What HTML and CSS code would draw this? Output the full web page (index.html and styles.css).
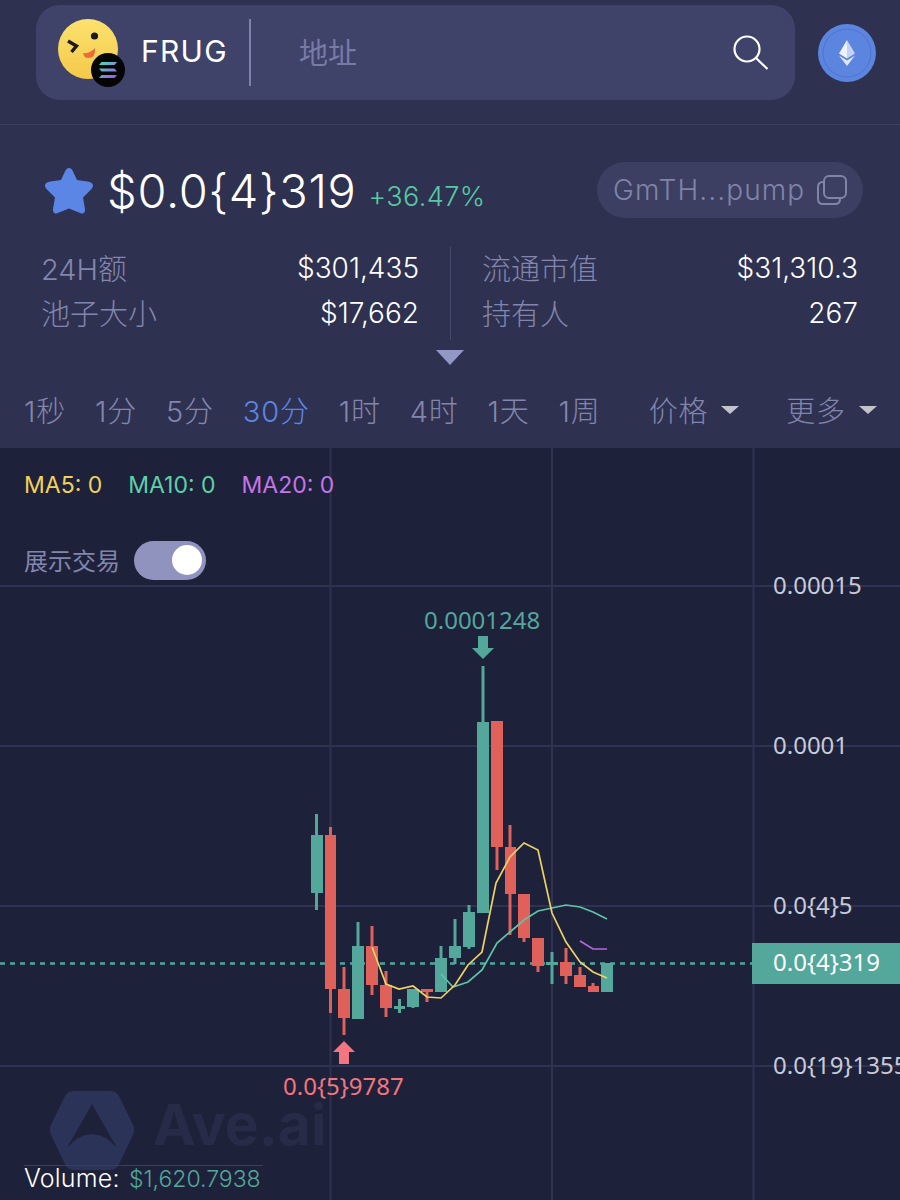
FILE: index.html
```html
<!DOCTYPE html>
<html lang="zh-CN">
<head>
  <meta charset="UTF-8">
  <meta name="viewport" content="width=device-width, initial-scale=1.0">
  <title>FRUG</title>
  <link rel="stylesheet" href="styles.css">
</head>
<body>
  <header class="top-bar">
    <div class="search-box">
      <div class="token-logo">
        <svg class="token-face" viewBox="0 0 60 60">
          <defs>
            <linearGradient id="faceFill" x1="0" y1="0" x2="0" y2="1">
              <stop offset="0" stop-color="#fbe26e"/>
              <stop offset="1" stop-color="#f5c94a"/>
            </linearGradient>
          </defs>
          <circle cx="30" cy="30" r="30" fill="url(#faceFill)"/>
          <circle cx="36.500" cy="17" r="3.600" fill="#1b1b1b"/>
          <path d="M10 22 L18.500 27 L13.500 33" fill="none" stroke="#1b1b1b" stroke-width="3.400"/>
          <path d="M25 34 Q32 35 37 29 Q38 39 30 39 Q26 39 25 34 Z" fill="#ee6a3a"/>
        </svg>
        <svg class="chain-badge" viewBox="0 0 34 34">
          <defs>
            <linearGradient id="solFill" x1="0" y1="0" x2="1" y2="1">
              <stop offset="0" stop-color="#3fe6b0"/>
              <stop offset="1" stop-color="#a84df0"/>
            </linearGradient>
          </defs>
          <circle cx="17" cy="17" r="17" fill="#050505"/>
          <path d="M10.500 9 H26 L23.500 12 H8 Z M8 15.500 H23.500 L26 18.500 H10.500 Z M10.500 22 H26 L23.500 25 H8 Z" fill="url(#solFill)"/>
        </svg>
      </div>
      <span class="token-name">FRUG</span>
      <span class="search-divider"></span>
      <span class="search-hint">地址</span>
      <svg class="search-icon" viewBox="0 0 36 36">
        <circle cx="14" cy="14" r="12.500" fill="none" stroke="#fff" stroke-width="2.200"/>
        <line x1="23" y1="23" x2="34.500" y2="34" stroke="#fff" stroke-width="2.200"/>
      </svg>
    </div>
    <div class="chain-switch">
      <svg viewBox="0 0 58 58">
        <circle cx="29" cy="29" r="29" fill="#5c85e0"/>
        <circle cx="29" cy="29" r="24" fill="none" stroke="#4f74cc" stroke-width="1"/>
        <path d="M29 16 L37 29.500 L29 34.500 Z" fill="#c5d2f3"/>
        <path d="M29 16 L21 29.500 L29 34.500 Z" fill="#eef2fc"/>
        <path d="M21 31.500 L29 36.500 L37 31.500 L29 42 Z" fill="#dfe6f9"/>
      </svg>
    </div>
  </header>

  <section class="summary">
    <div class="price-row">
      <svg class="fav-star" viewBox="0 0 50 50">
        <path d="M25 3 C27 3 28 4.500 29 6.500 L33 15 L43.500 16.500 C47.500 17 49 19 49 20.500 C49 22 48 23.500 46.500 25 L39 32.500 L41 44 C41.500 47 39.500 49 37.500 48.500 L25 43.500 L12.500 48.500 C10.500 49 8.500 47 9 44 L11 32.500 L3.500 25 C2 23.500 1 22 1 20.500 C1 19 2.500 17 6.500 16.500 L17 15 L21 6.500 C22 4.500 23 3 25 3 Z" fill="#5b86e5"/>
      </svg>
      <span class="price">$0.0{4}319</span>
      <span class="change">+36.47%</span>
      <div class="address-chip">
        <span>GmTH...pump</span>
        <svg class="copy-icon" viewBox="0 0 30 30">
          <rect x="7" y="1" width="22" height="22" rx="5" fill="none" stroke="#7f84a8" stroke-width="2"/>
          <path d="M7 7 H6 Q1 7 1 12 V24 Q1 29 6 29 H18 Q23 29 23 24 V23" fill="none" stroke="#7f84a8" stroke-width="2"/>
        </svg>
      </div>
    </div>

    <div class="stats">
      <div class="stats-col">
        <div class="stat"><span class="stat-label">24H额</span><span class="stat-value">$301,435</span></div>
        <div class="stat"><span class="stat-label">池子大小</span><span class="stat-value">$17,662</span></div>
      </div>
      <div class="stats-col stats-col-right">
        <div class="stat"><span class="stat-label">流通市值</span><span class="stat-value">$31,310.3</span></div>
        <div class="stat"><span class="stat-label">持有人</span><span class="stat-value">267</span></div>
      </div>
    </div>
    <div class="expand-arrow"></div>
  </section>

  <nav class="periods">
    <span class="period">1秒</span>
    <span class="period">1分</span>
    <span class="period">5分</span>
    <span class="period active">30分</span>
    <span class="period">1时</span>
    <span class="period">4时</span>
    <span class="period">1天</span>
    <span class="period">1周</span>
    <span class="period dropdown first-dropdown">价格<i class="caret"></i></span>
    <span class="period dropdown">更多<i class="caret"></i></span>
  </nav>

  <main class="chart">
    <svg class="chart-canvas" viewBox="0 448 900 752">
      <!-- watermark -->
      <path class="mark-hex" d="M74 1091 H110 Q116 1091 119 1096 L133 1125 Q135 1130 133 1135 L119 1164 Q116 1170 110 1170 H74 Q68 1170 65 1164 L51 1135 Q49 1130 51 1125 L65 1096 Q68 1091 74 1091 Z"/>
      <path class="mark-arrow" d="M92 1104 L117 1148 Q105 1134 92 1134 Q79 1134 67 1148 Z"/>
      <text class="mark-text" x="153" y="1145">Ave.ai</text>

      <!-- grid -->
      <g class="grid">
        <line x1="0" y1="586" x2="900" y2="586"/>
        <line x1="0" y1="746" x2="900" y2="746"/>
        <line x1="0" y1="906" x2="900" y2="906"/>
        <line x1="0" y1="1066" x2="900" y2="1066"/>
        <line x1="330.500" y1="448" x2="330.500" y2="1200"/>
        <line x1="552" y1="448" x2="552" y2="1200"/>
        <line x1="753.500" y1="448" x2="753.500" y2="1200"/>
      </g>

      <!-- last price line -->
      <line class="last-line" x1="0" y1="963.500" x2="752" y2="963.500"/>

      <!-- candles -->
      <g class="up">
        <line x1="316.500" y1="814" x2="316.500" y2="910"/><rect x="311" y="835" width="12" height="58"/>
        <line x1="358" y1="922" x2="358" y2="1019"/><rect x="352" y="946" width="12" height="73"/>
        <line x1="399.500" y1="999" x2="399.500" y2="1013"/><rect x="394" y="1006" width="11" height="3"/>
        <line x1="413" y1="989" x2="413" y2="1008"/><rect x="407" y="989" width="12" height="18"/>
        <line x1="441" y1="946" x2="441" y2="992"/><rect x="435" y="958" width="12" height="34"/>
        <line x1="455" y1="919" x2="455" y2="964"/><rect x="449" y="946" width="12" height="12"/>
        <line x1="469" y1="905" x2="469" y2="949"/><rect x="463" y="912" width="12" height="35"/>
        <line x1="483" y1="666" x2="483" y2="913"/><rect x="477" y="722" width="12" height="191"/>
        <line x1="552" y1="952" x2="552" y2="984"/><rect x="546" y="962" width="12" height="3"/>
        <rect x="601" y="963" width="12" height="29"/>
      </g>
      <g class="down">
        <line x1="330.500" y1="827" x2="330.500" y2="1013"/><rect x="325" y="835" width="11" height="154"/>
        <line x1="344" y1="967" x2="344" y2="1035"/><rect x="338" y="989" width="12" height="29"/>
        <line x1="372" y1="926" x2="372" y2="995"/><rect x="366" y="946" width="12" height="39"/>
        <line x1="386" y1="971" x2="386" y2="1017"/><rect x="380" y="985" width="12" height="23"/>
        <line x1="427" y1="989" x2="427" y2="1002"/><rect x="421" y="989" width="12" height="3"/>
        <line x1="497" y1="721" x2="497" y2="870"/><rect x="491" y="721" width="12" height="126"/>
        <line x1="510" y1="825" x2="510" y2="935"/><rect x="505" y="847" width="11" height="47"/>
        <line x1="524" y1="894" x2="524" y2="942"/><rect x="518" y="894" width="12" height="44"/>
        <line x1="538" y1="938" x2="538" y2="972"/><rect x="532" y="938" width="12" height="28"/>
        <line x1="566" y1="948" x2="566" y2="984"/><rect x="560" y="962" width="12" height="14"/>
        <line x1="580" y1="967" x2="580" y2="987"/><rect x="574" y="975" width="12" height="12"/>
        <line x1="593" y1="983" x2="593" y2="992"/><rect x="588" y="986" width="11" height="6"/>
      </g>

      <!-- moving averages -->
      <polyline class="ma ma10-line" points="441,974 453,987 468,982 482,970 497,943 510,932 524,920 538,911 552,908 566,905 580,907 593,912 607,919"/>
      <polyline class="ma ma20-line" points="580,941 593,949 607,949"/>
      <polyline class="ma ma5-line" points="372,947 386,984 399,989 413,986 427,997 441,998 455,985 468,965 482,952 496,883 510,857 524,843 538,850 552,913 566,942 580,962 593,972 607,978"/>

      <!-- high / low markers -->
      <path class="high-mark" d="M478 636 H488 V648 H494 L483 659 L472 648 H478 Z"/>
      <path class="low-mark" d="M339 1064 V1052 H333 L344 1041 L355 1052 H349 V1064 Z"/>
      <text class="high-text" x="424" y="629">0.0001248</text>
      <text class="low-text" x="283" y="1095">0.0{5}9787</text>

      <!-- price axis -->
      <g class="axis">
        <text x="773" y="594">0.00015</text>
        <text x="773" y="754">0.0001</text>
        <text x="773" y="914">0.0{4}5</text>
        <text x="773" y="1074">0.0{19}1355</text>
      </g>
      <rect class="last-tag" x="752" y="943" width="148" height="41"/>
      <text class="last-text" x="773" y="971">0.0{4}319</text>
    </svg>

    <div class="legend">
      <span class="ma5">MA5: 0</span>
      <span class="ma10">MA10: 0</span>
      <span class="ma20">MA20: 0</span>
    </div>
    <div class="trade-toggle">
      <span class="toggle-label">展示交易</span>
      <span class="switch"><i class="knob"></i></span>
    </div>
    <div class="volume">Volume: <span class="volume-value">$1,620.7938</span></div>
  </main>
</body>
</html>
```
FILE: styles.css
```css
* {
  box-sizing: border-box;
}
html, body {
  margin: 0;
  padding: 0;
}
body {
  width: 900px;
  height: 1200px;
  overflow: hidden;
  background-color: #2e3150;
  color: #fff;
  font-family: Inter, "Noto Sans CJK SC", sans-serif;
}

/* top bar */
.top-bar {
  display: flex;
  align-items: flex-start;
  height: 125px;
  padding: 5px 24px 0 36px;
  border-bottom: 1px solid #3b3e5e;
}
.search-box {
  display: flex;
  align-items: center;
  width: 759px;
  height: 95px;
  padding: 0 26px 0 22px;
  background-color: #3f4269;
  border-radius: 24px;
}
.token-logo {
  position: relative;
  width: 68px;
  height: 68px;
  flex: none;
}
.token-face {
  display: block;
  width: 60px;
  height: 60px;
}
.chain-badge {
  position: absolute;
  left: 33px;
  top: 34px;
  width: 34px;
  height: 34px;
}
.token-name {
  width: 86px;
  margin: -3px 0 0 15px;
  font-size: 30px;
  letter-spacing: 1.3px;
  white-space: nowrap;
}
.search-divider {
  width: 2px;
  height: 67px;
  margin-left: 22px;
  background-color: #7d81ad;
}
.search-hint {
  margin: -4px 0 0 48px;
  font-size: 29px;
  color: #777ba6;
}
.search-icon {
  width: 36px;
  height: 36px;
  margin-left: auto;
}
.chain-switch {
  margin: 19px 0 0 23px;
  width: 58px;
  height: 58px;
}
.chain-switch svg {
  display: block;
}

/* price and stats */
.summary {
  position: relative;
  height: 250px;
}
.price-row {
  display: flex;
  align-items: center;
  height: 56px;
  margin-top: 37px;
  padding-left: 44px;
  position: absolute;
  top: 0;
  left: 0;
  right: 37px;
}
.fav-star {
  width: 50px;
  height: 50px;
  flex: none;
}
.price {
  margin-left: 13px;
  font-size: 47px;
  font-weight: 300;
  letter-spacing: 0.7px;
}
.change {
  margin: 13px 0 0 12px;
  font-size: 27px;
  font-weight: 300;
  letter-spacing: 0.4px;
  color: #56c9a4;
}
.address-chip {
  display: flex;
  align-items: center;
  justify-content: space-between;
  width: 266px;
  height: 56px;
  margin-left: auto;
  padding: 0 16px;
  background-color: #3c3f62;
  border-radius: 28px;
  font-size: 28px;
  font-weight: 300;
  letter-spacing: 1.100px;
  color: #7f84a8;
}
.copy-icon {
  width: 30px;
  height: 30px;
}
.stats {
  position: absolute;
  left: 0;
  right: 0;
  top: 122px;
  display: grid;
  grid-template-columns: 450px 450px;
}
.stats-col {
  display: flex;
  flex-direction: column;
  gap: 5px;
  height: 93px;
  padding: 0 31px 0 41px;
}
.stats-col-right {
  padding: 0 42px 0 31px;
  border-left: 1px solid #46496b;
}
.stat {
  display: flex;
  justify-content: space-between;
  align-items: center;
  height: 40px;
}
.stat-label {
  font-size: 29px;
  font-weight: 300;
  color: #8286ad;
}
.stat-value {
  padding-top: 2px;
  font-size: 28px;
  font-weight: 300;
}
.expand-arrow {
  position: absolute;
  left: 436px;
  top: 225px;
  width: 0;
  height: 0;
  border-left: 14px solid transparent;
  border-right: 14px solid transparent;
  border-top: 15px solid #9397c5;
}

/* period tabs */
.periods {
  display: flex;
  align-items: center;
  gap: 29px;
  height: 73px;
  padding: 0 0 6px 24px;
  font-size: 29px;
  font-weight: 300;
  letter-spacing: 0.800px;
  color: #8286ad;
}
.period.active {
  color: #5b86e5;
}
.dropdown {
  display: flex;
  align-items: center;
  gap: 13px;
  margin-left: 18px;
}
.first-dropdown {
  margin-left: 19px;
}
.caret {
  width: 0;
  height: 0;
  margin-top: 3px;
  border-left: 9px solid transparent;
  border-right: 9px solid transparent;
  border-top: 8px solid #c3c3cc;
}

/* chart */
.chart {
  position: relative;
  width: 900px;
  height: 752px;
  overflow: hidden;
  background-color: #1e213a;
}
.chart-canvas {
  display: block;
  width: 900px;
  height: 752px;
}
.grid line {
  stroke: #2f3250;
  stroke-width: 2;
}
.last-line {
  stroke: #4fa69a;
  stroke-width: 2.500;
  stroke-dasharray: 5 5;
}
.up line, .up rect {
  stroke: none;
  fill: #53a79b;
}
.up line {
  stroke: #53a79b;
  stroke-width: 3;
}
.down line {
  stroke: #e0605a;
  stroke-width: 3;
}
.down rect {
  fill: #e0605a;
}
.ma {
  fill: none;
  stroke-width: 1.700;
}
.ma5-line {
  stroke: #eed265;
}
.ma10-line {
  stroke: #5fc4a5;
}
.ma20-line {
  stroke: #b668d8;
}
.high-mark {
  fill: #53a79b;
}
.low-mark {
  fill: #f2757f;
}
.high-text, .low-text, .axis text, .last-text {
  font-family: "Noto Sans", sans-serif;
  font-size: 24px;
}
.high-text {
  fill: #53a79b;
}
.low-text {
  fill: #f2757f;
}
.axis text {
  fill: #c9cad6;
}
.last-tag {
  fill: #53a79b;
}
.last-text {
  fill: #fff;
}
.mark-hex {
  fill: #2c3358;
}
.mark-arrow {
  fill: #1e213a;
}
.mark-text {
  font-family: Inter, sans-serif;
  font-size: 57px;
  font-weight: 700;
  fill: #272b48;
}
.legend {
  position: absolute;
  left: 24px;
  top: 23px;
  display: flex;
  gap: 26px;
  font-size: 23px;
}
.ma5 {
  color: #f0d25a;
}
.ma10 {
  color: #5fd0a8;
}
.ma20 {
  color: #c575e6;
}
.trade-toggle {
  position: absolute;
  left: 24px;
  top: 93px;
  display: flex;
  align-items: center;
  gap: 14px;
  font-size: 24px;
  color: #8286ad;
}
.toggle-label {
  padding-bottom: 3px;
}
.switch {
  position: relative;
  width: 72px;
  height: 39px;
  background-color: #8f93bd;
  border-radius: 20px;
}
.knob {
  position: absolute;
  right: 4px;
  top: 4px;
  width: 30px;
  height: 30px;
  background-color: #fff;
  border-radius: 50%;
}
.volume {
  position: absolute;
  left: 24px;
  top: 717px;
  width: 239px;
  border-top: 1px solid #3b3e5e;
  font-size: 25px;
  line-height: 24px;
  font-weight: 300;
  letter-spacing: 0.200px;
  white-space: nowrap;
}
.volume-value {
  margin-left: 2px;
  font-size: 23px;
  letter-spacing: 0;
  color: #53a79b;
}
```
